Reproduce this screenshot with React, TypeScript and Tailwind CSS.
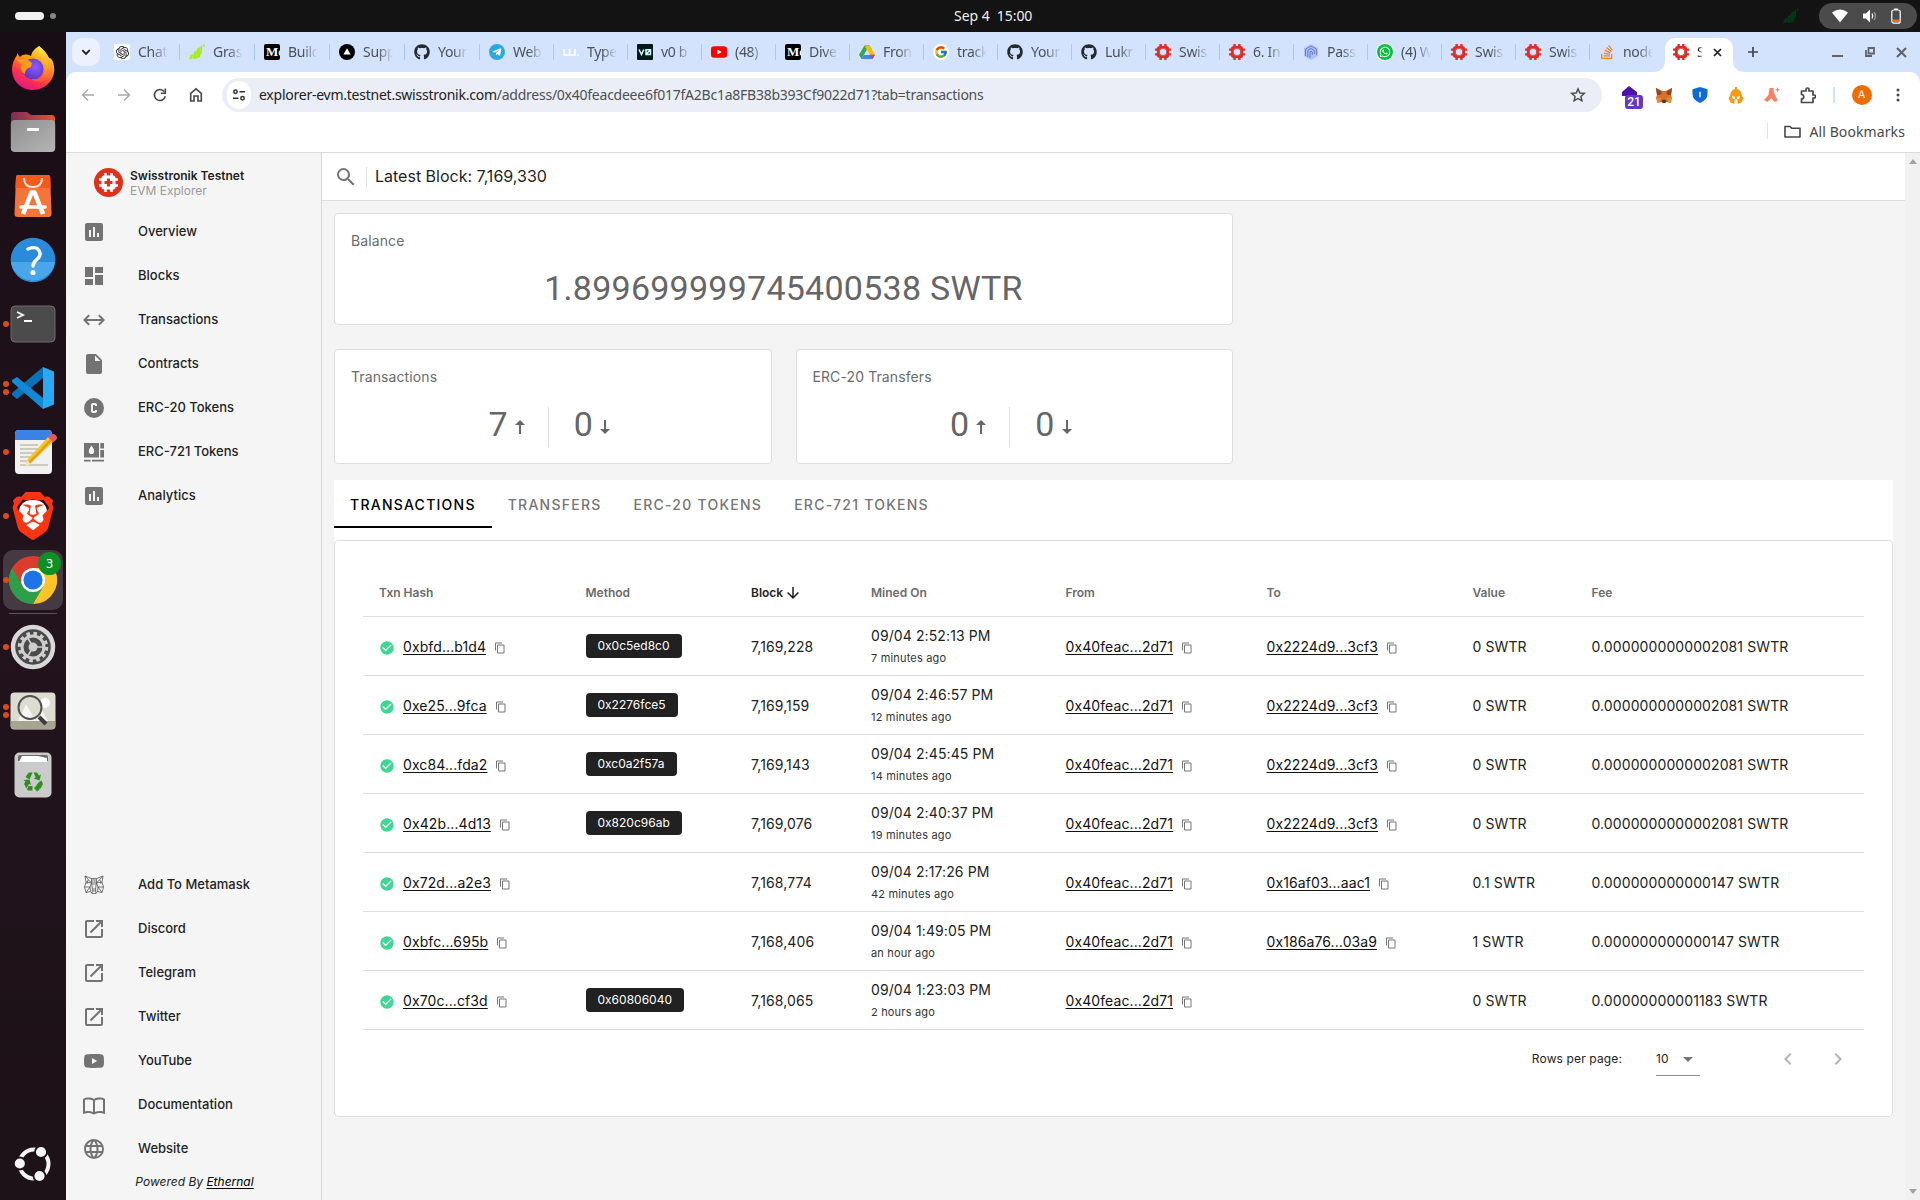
import React from "react";
import { FaGithub, FaTelegramPlane, FaWhatsapp, FaStackOverflow } from "react-icons/fa";
import { SiOpenai, SiBrave } from "react-icons/si";
import { FcGoogle } from "react-icons/fc";

/* ---------- icon paths ---------- */

const P = {
  chart:
    "M9 17H7V10H9V17M13 17H11V7H13V17M17 17H15V13H17V17M19 3H5C3.9 3 3 3.9 3 5V19C3 20.1 3.9 21 5 21H19C20.1 21 21 20.1 21 19V5C21 3.9 20.1 3 19 3Z",
  dashboard: "M13,3V9H21V3M13,21H21V11H13M3,21H11V15H3M3,13H11V3H3V13Z",
  swap: "M6.45,17.45L1,12L6.45,6.55L7.86,7.96L4.83,11H19.17L16.14,7.96L17.55,6.55L23,12L17.55,17.45L16.14,16.04L19.17,13H4.83L7.86,16.04L6.45,17.45Z",
  file: "M13,9V3.5L18.5,9M6,2C4.89,2 4,2.89 4,4V20A2,2 0 0,0 6,22H18A2,2 0 0,0 20,20V8L14,2H6Z",
  alphaC:
    "M11,7A2,2 0 0,0 9,9V15A2,2 0 0,0 11,17H13A2,2 0 0,0 15,15V14H13V15H11V9H13V10H15V9A2,2 0 0,0 13,7H11M12,2A10,10 0 0,1 22,12A10,10 0 0,1 12,22A10,10 0 0,1 2,12A10,10 0 0,1 12,2Z",
  art: "M2,3H17V17.5H2ZM9.5,5.5C8,7.8 6.8,9.3 6.8,11.2A2.7,2.8 0 0,0 12.2,11.2C12.2,9.3 11,7.8 9.5,5.5ZM18.3,3H22V8.5H18.3ZM18.3,10H22V17.5H18.3ZM2,19.8H8.6V21.6H2ZM10,19.8H22V21.6H10Z",
  open: "M14,3V5H17.59L7.76,14.83L9.17,16.24L19,6.41V10H21V3M19,19H5V5H12V3H5C3.89,3 3,3.9 3,5V19A2,2 0 0,0 5,21H19A2,2 0 0,0 21,19V12H19V19Z",
  youtube:
    "M10,15L15.19,12L10,9V15M21.56,7.17C21.69,7.64 21.78,8.27 21.84,9.07C21.91,9.87 21.94,10.56 21.94,11.16L22,12C22,14.19 21.84,15.8 21.56,16.83C21.31,17.73 20.73,18.31 19.83,18.56C19.36,18.69 18.5,18.78 17.18,18.84C15.88,18.91 14.69,18.94 13.59,18.94L12,19C7.81,19 5.2,18.84 4.17,18.56C3.27,18.31 2.69,17.73 2.44,16.83C2.31,16.36 2.22,15.73 2.16,14.93C2.09,14.13 2.06,13.44 2.06,12.84L2,12C2,9.81 2.16,8.2 2.44,7.17C2.69,6.27 3.27,5.69 4.17,5.44C4.64,5.31 5.5,5.22 6.82,5.16C8.12,5.09 9.31,5.06 10.41,5.06L12,5C16.19,5 18.8,5.16 19.83,5.44C20.73,5.69 21.31,6.27 21.56,7.17Z",
  book: "M12 21.5C10.65 20.65 8.2 20 6.5 20C4.85 20 3.15 20.3 1.75 21.05C1.65 21.1 1.6 21.1 1.5 21.1C1.25 21.1 1 20.85 1 20.6V6C1.6 5.55 2.25 5.25 3 5C4.11 4.65 5.33 4.5 6.5 4.5C8.45 4.5 10.55 4.9 12 6C13.45 4.9 15.55 4.5 17.5 4.5C18.67 4.5 19.89 4.65 21 5C21.75 5.25 22.4 5.55 23 6V20.6C23 20.85 22.75 21.1 22.5 21.1C22.4 21.1 22.35 21.1 22.25 21.05C20.85 20.3 19.15 20 17.5 20C15.8 20 13.35 20.65 12 21.5M11 7.5C9.64 6.9 7.84 6.5 6.5 6.5C5.3 6.5 4.1 6.65 3 7V18.5C4.1 18.15 5.3 18 6.5 18C7.84 18 9.64 18.4 11 19V7.5M13 19C14.36 18.4 16.16 18 17.5 18C18.7 18 19.9 18.15 21 18.5V7C19.9 6.65 18.7 6.5 17.5 6.5C16.16 6.5 14.36 6.9 13 7.5V19Z",
  web: "M16.36,14C16.44,13.34 16.5,12.68 16.5,12C16.5,11.32 16.44,10.66 16.36,10H19.74C19.9,10.64 20,11.31 20,12C20,12.69 19.9,13.36 19.74,14M14.59,19.56C15.19,18.45 15.65,17.25 15.97,16H18.92C17.96,17.65 16.43,18.93 14.59,19.56M14.34,14H9.66C9.56,13.34 9.5,12.68 9.5,12C9.5,11.32 9.56,10.65 9.66,10H14.34C14.43,10.65 14.5,11.32 14.5,12C14.5,12.68 14.43,13.34 14.34,14M12,19.96C11.17,18.76 10.5,17.43 10.09,16H13.91C13.5,17.43 12.83,18.76 12,19.96M8,8H5.08C6.03,6.34 7.57,5.06 9.4,4.44C8.8,5.55 8.35,6.75 8,8M5.08,16H8C8.35,17.25 8.8,18.45 9.4,19.56C7.57,18.93 6.03,17.65 5.08,16M4.26,14C4.1,13.36 4,12.69 4,12C4,11.31 4.1,10.64 4.26,10H7.64C7.56,10.66 7.5,11.32 7.5,12C7.5,12.68 7.56,13.34 7.64,14M12,4.03C12.83,5.23 13.5,6.57 13.91,8H10.09C10.5,6.57 11.17,5.23 12,4.03M18.92,8H15.97C15.65,6.75 15.19,5.55 14.59,4.44C16.43,5.07 17.96,6.34 18.92,8M12,2C6.47,2 2,6.5 2,12A10,10 0 0,0 12,22A10,10 0 0,0 22,12A10,10 0 0,0 12,2Z",
  magnify:
    "M9.5,3A6.5,6.5 0 0,1 16,9.5C16,11.11 15.41,12.59 14.44,13.73L14.71,14H15.5L20.5,19L19,20.5L14,15.5V14.71L13.73,14.44C12.59,15.41 11.11,16 9.5,16A6.5,6.5 0 0,1 3,9.5A6.5,6.5 0 0,1 9.5,3M9.5,5C7,5 5,7 5,9.5C5,12 7,14 9.5,14C12,14 14,12 14,9.5C14,7 12,5 9.5,5Z",
  copy: "M19,21H8V7H19M19,5H8A2,2 0 0,0 6,7V21A2,2 0 0,0 8,23H19A2,2 0 0,0 21,21V7A2,2 0 0,0 19,5M16,1H4A2,2 0 0,0 2,3V17H4V3H16V1Z",
  check: "M12 2C6.5 2 2 6.5 2 12S6.5 22 12 22 22 17.5 22 12 17.5 2 12 2M10 17L5 12L6.41 10.59L10 14.17L17.59 6.58L19 8L10 17Z",
  down: "M11,4H13V16L18.5,10.5L19.92,11.92L12,19.84L4.08,11.92L5.5,10.5L11,16V4Z",
  upThin: "M7.03 9.97H11.03V18.89L13.04 18.92V9.97H17.03L12.03 4.97Z",
  downThin: "M7.03 13.92H11.03V5L13.04 4.97V13.92H17.03L12.03 18.92Z",
  left: "M15.41,16.58L10.83,12L15.41,7.41L14,6L8,12L14,18L15.41,16.58Z",
  right: "M8.59,16.58L13.17,12L8.59,7.41L10,6L16,12L10,18L8.59,16.58Z",
  caret: "M7,10L12,15L17,10H7Z",
};

function Mdi({ d, size, className }: { d: string; size: number; className?: string }) {
  return (
    <svg width={size} height={size} viewBox="0 0 24 24" fill="currentColor" fillRule="evenodd" className={`shrink-0 ${className ?? ""}`}>
      <path d={d} />
    </svg>
  );
}

/* ---------- favicons ---------- */

const Swiss = () => (
  <svg width="16" height="16" viewBox="0 0 16 16" fill="none" stroke="#df2b25">
    <rect x="3.4" y="3.4" width="9.2" height="9.2" rx="1.2" strokeWidth="2.8" />
    <path d="M5.600 0v3M10.400 0v3M5.600 13v3M10.400 13v3M0 5.600h3M0 10.400h3M13 5.600h3M13 10.400h3" strokeWidth="2.400" />
    <path d="M4.600 5.200h1.600M9.800 5.200h1.600M4.600 10.800h1.600M9.800 10.800h1.600" strokeWidth="1.200" />
  </svg>
);
const Grass = ({ color }: { color: string }) => (
  <svg width="16" height="16" viewBox="0 0 16 16" fill={color}>
    <path d="M0 15.500L1.500 11L4 10L3.500 14.500ZM4 14.500L4.800 8L7.800 6.500L7.500 15ZM7.800 14.500V5L11.200 3V13ZM11.400 11V2.500L12.800 1.500L13.200 4L13 9ZM13.200 1.500L15.800 0L15.500 3Z" />
  </svg>
);
const Medium = () => (
  <div className="flex size-4 items-center overflow-hidden rounded-xs bg-black pl-0.5 font-['Liberation_Serif',serif] text-[13px] font-bold text-white">Me</div>
);
const Github = () => <FaGithub size={16} color="#24292f" />;

const favicons: Record<string, React.ReactNode> = {
  chat: (
    <div className="flex size-4 items-center justify-center rounded-xs bg-white">
      <SiOpenai size={13} color="#222" />
    </div>
  ),
  grass: <Grass color="#a5ee1c" />,
  medium: <Medium />,
  vercel: (
    <svg width="16" height="16" viewBox="0 0 16 16">
      <circle cx="8" cy="8" r="8" />
      <path d="M8 4.2L11.6 10.4H4.4Z" fill="#fff" />
    </svg>
  ),
  github: <Github />,
  telegram: (
    <div className="flex size-4 items-center justify-center rounded-full bg-[#2fa6de]">
      <FaTelegramPlane size={10} color="#fff" />
    </div>
  ),
  type: (
    <svg width="16" height="16" viewBox="0 0 16 16" fill="none" stroke="#f4f8ff" strokeWidth="2">
      <path d="M1 5v6h11V5M6.500 5v6M14 11h2" />
    </svg>
  ),
  v0: (
    <svg width="16" height="16" viewBox="0 0 16 16">
      <rect width="16" height="16" rx="1" fill="#04191a" />
      <path d="M2 5.500L4.500 10.500L6.800 5.500M9 5.800h4.500v4.600H9ZM9 10.200L13.500 6" fill="none" stroke="#c7f7ee" strokeWidth="1.600" />
    </svg>
  ),
  youtube: (
    <svg width="16" height="16" viewBox="0 0 16 16">
      <rect y="2.2" width="16" height="11.6" rx="3" fill="#f00" />
      <path d="M6.300 5.500L10.800 8L6.300 10.500Z" fill="#fff" />
    </svg>
  ),
  drive: (
    <svg width="16" height="16" viewBox="0 0 16 16">
      <path d="M5.500 1.500h5L13 6l-3 .5L8 5Z" fill="#188038" />
      <path d="M5.500 1.500L0 10.800L2.500 15L8 5.800Z" fill="#34a853" />
      <path d="M10.500 1.500L16 10.800h-5L5.600 1.500Z" fill="#fbbc04" />
      <path d="M5 10.800H16L13.500 15h-11Z" fill="#4285f4" />
      <path d="M8 6L10.800 10.800H5.200Z" fill="#d3e3fd" />
      <path d="M11 10.800h5L13.500 15Z" fill="#ea4335" />
    </svg>
  ),
  google: (
    <div className="flex size-4 items-center justify-center rounded-full bg-white">
      <FcGoogle size={14} />
    </div>
  ),
  swiss: <Swiss />,
  pass: (
    <svg width="16" height="16" viewBox="0 0 16 16" fill="none">
      <path d="M8 0L15 4V12L8 16L1 12V4Z" fill="#a9c4f6" />
      <path d="M2.500 12V5L8 2L13.500 5V11M4.800 13V6.300L8 4.500L11.300 6.300V10M7 14V8L8 7.200L9.300 8v3" stroke="#6d79dc" strokeWidth="1" />
    </svg>
  ),
  whatsapp: (
    <div className="flex size-4 items-center justify-center rounded-full bg-[#0abf3f] ring-1 ring-white/70">
      <FaWhatsapp size={12} color="#fff" />
    </div>
  ),
  stack: <FaStackOverflow size={16} color="#f0802b" />,
};

const tabs: [string, string][] = [
  ["chat", "Chat"],
  ["grass", "Gras"],
  ["medium", "Build"],
  ["vercel", "Supp"],
  ["github", "Your"],
  ["telegram", "Web"],
  ["type", "Type"],
  ["v0", "v0 b"],
  ["youtube", "(48)"],
  ["medium", "Dive"],
  ["drive", "Fron"],
  ["google", "track"],
  ["github", "Your"],
  ["github", "Lukr"],
  ["swiss", "Swis"],
  ["swiss", "6. In"],
  ["pass", "Pass"],
  ["whatsapp", "(4) W"],
  ["swiss", "Swis"],
  ["swiss", "Swis"],
  ["stack", "node"],
];

/* ---------- desktop chrome ---------- */

function TopBar() {
  return (
    <div className="grid h-8 shrink-0 grid-cols-3 items-center bg-[#131313] text-[#f0f0f0]">
      <div className="flex items-center gap-[6px] pl-[15px]">
        <div className="h-2 w-[29px] rounded-full bg-[#f2f2f2]" />
        <div className="size-1.5 rounded-full bg-[#888]" />
      </div>
      <div className="pb-[2px] pl-[314px] font-['Noto_Sans',sans-serif] text-[14px] tracking-[-0.050px] whitespace-pre">Sep 4  15:00</div>
      <div className="flex items-center justify-end gap-[20px] pr-[3px]">
        <Grass color="#053812" />
        <div className="flex h-[26px] w-[98px] items-center justify-between rounded-full bg-[#4b4b4b] pr-[16px] pl-[13px]">
          <svg width="16" height="14" viewBox="0 0 16 14" fill="#fff">
            <path d="M8 13.500L0 3.500Q8 -2.500 16 3.500Z" />
          </svg>
          <svg width="16" height="16" viewBox="0 0 16 16" fill="none">
            <path d="M1 5.500H4L8 1.500V14.500L4 10.500H1Z" fill="#fff" />
            <path d="M10 5.500Q11.500 8 10 10.500" stroke="#fff" strokeWidth="1.300" />
            <path d="M12 4Q15 8 12 12" stroke="#999" strokeWidth="1.300" />
          </svg>
          <svg width="10" height="16" viewBox="0 0 10 16">
            <rect x="0.800" y="2" width="8.400" height="13.200" rx="2" fill="none" stroke="#fff" strokeWidth="1.200" />
            <rect x="3" y="0.500" width="4" height="1.500" fill="#fff" />
            <rect x="2" y="11.500" width="6" height="2.500" fill="#f0692a" />
          </svg>
        </div>
      </div>
    </div>
  );
}

const DockFirefox = () => (
  <svg width="44" height="46" viewBox="0 0 44 46">
    <defs>
      <linearGradient id="ff1" x1="0.8" y1="0" x2="0.3" y2="1">
        <stop offset="0" stopColor="#fff44f" />
        <stop offset="0.4" stopColor="#ff980e" />
        <stop offset="0.7" stopColor="#ff3647" />
        <stop offset="1" stopColor="#e31587" />
      </linearGradient>
      <linearGradient id="ff3" x1="0.3" y1="0" x2="0.4" y2="1">
        <stop offset="0" stopColor="#ffee45" />
        <stop offset="0.5" stopColor="#ffb52c" />
        <stop offset="1" stopColor="#ff5a3a" />
      </linearGradient>
      <radialGradient id="ff2" cx="0.6" cy="0.4" r="0.6">
        <stop offset="0" stopColor="#9059ff" />
        <stop offset="1" stopColor="#5b39c4" />
      </radialGradient>
    </defs>
    <path d="M28 1C33 5 36 9 38 13C40 13 41 15 42 17C47 32 36 45 22 45C10 45 1 36 1 24C1 19 3 14 6 10V8L9 12C12 9 16 9 20 11C21 7 23 4 28 1Z" fill="url(#ff1)" />
    <circle cx="22" cy="24" r="10.500" fill="url(#ff2)" />
    <path d="M5 12L9 15C13 13 17 14 21 18L20 22C16 23 14 25 14 29C9 27 9 22 11 19C8 18 6 16 5 12Z" fill="#ff9a1c" />
    <path d="M28 1C26 10 34 14 34 24C34 33 26 36 20 34C31 41 42 34 42 20C41 15 39 15 38 13C36 9 33 5 28 1Z" fill="url(#ff3)" opacity="0.900" />
  </svg>
);
const DockFiles = () => (
  <svg width="46" height="42" viewBox="0 0 46 42">
    <defs>
      <linearGradient id="fi1">
        <stop offset="0" stopColor="#792d5c" />
        <stop offset="1" stopColor="#e8562a" />
      </linearGradient>
      <linearGradient id="fi2" x2="1" y2="1">
        <stop offset="0" stopColor="#8f8f8f" />
        <stop offset="1" stopColor="#b5b5b5" />
      </linearGradient>
    </defs>
    <path d="M1 4Q1 1 4 1H17L21 4H42Q45 4 45 8V22H1Z" fill="url(#fi1)" />
    <rect x="0.800" y="9" width="44.400" height="32" rx="4" fill="url(#fi2)" />
    <rect x="17" y="17" width="12" height="3" rx="1" fill="#fff" />
  </svg>
);
const DockStore = () => (
  <svg width="38" height="44" viewBox="0 0 38 44">
    <path d="M4 1H34Q36 1 36.200 3L37.500 40Q37.500 43 34.500 43H3.500Q0.500 43 0.500 40L2 3Q2 1 4 1Z" fill="#f4743a" />
    <path d="M4 1H34Q36 1 36.200 3L36.700 14H1.400L2 3Q2 1 4 1Z" fill="#f15a1f" />
    <path d="M10 4Q10 13 19 13T28 4" fill="none" stroke="#ffe3d3" strokeWidth="2" />
    <path d="M9 40L17.500 18.500H20.500L29 40" fill="none" stroke="#fff" strokeWidth="4.600" strokeLinejoin="round" />
    <path d="M7 33H31" stroke="#fff" strokeWidth="3.600" strokeLinecap="round" />
  </svg>
);
const DockHelp = () => (
  <svg width="46" height="46" viewBox="0 0 46 46">
    <circle cx="23" cy="23" r="22.300" fill="#2a8bdb" />
    <path d="M1 25H45A22.300 22.300 0 0 1 1 25Z" fill="#48a6e9" />
    <path d="M18 12Q28 8 30 16C31 23 23 22 23 29" fill="none" stroke="#fff" strokeWidth="3.400" strokeLinecap="round" />
    <circle cx="23" cy="35.500" r="2.600" fill="#fff" />
  </svg>
);
const DockTerminal = () => (
  <svg width="46" height="38" viewBox="0 0 46 38">
    <rect x="1" y="1" width="44" height="36" rx="4" fill="#4b4b4b" stroke="#6b6b6b" />
    <path d="M7 7L13 10L7 13M14 16H22" fill="none" stroke="#fff" strokeWidth="1.800" />
  </svg>
);
const DockCode = () => (
  <svg width="42" height="42" viewBox="0 0 42 42">
    <path d="M31 0V11L5 32L0 28V26Z" fill="#0a72b8" />
    <path d="M5 10L31 31V42L0 15V13Z" fill="#1389d6" />
    <path d="M31 0L42 4.500V37.500L31 42Z" fill="#29aaf3" />
  </svg>
);
const DockNotes = () => (
  <svg width="44" height="46" viewBox="0 0 44 46">
    <rect x="1" y="1" width="37" height="44" rx="4" fill="#f1f1f1" />
    <path d="M1 11V5Q1 1 5 1H34Q38 1 38 5V11Z" fill="#3a83e4" />
    <path d="M6 16H24M6 20H24M6 24H20M6 28H18M6 32H14M6 36H34" stroke="#c1bdae" strokeWidth="1.600" />
    <path d="M11 37L13 31L34 8L39 13L17 34Z" fill="#f6c42c" />
    <path d="M15 34L37 11" stroke="#e39b12" strokeWidth="2" />
    <path d="M11 38L13 31L17 35Z" fill="#f4dfb0" />
    <path d="M34 8L37 5Q40 4 42.500 7Q44 9 42 11L39 13.500Z" fill="#ea5460" />
  </svg>
);
const DockBrave = () => (
  <div className="relative flex h-12 w-[48px] items-center justify-center">
    <div className="h-8 w-7 rounded-xl bg-white" />
    <SiBrave size={48} color="#fb3512" className="absolute inset-0" />
  </div>
);
const DockChrome = () => (
  <svg width="48" height="48" viewBox="0 0 48 48">
    <circle cx="24" cy="24" r="24" fill="#dd3a30" />
    <path d="M24 12H44.800A24 24 0 0 1 24 48L34.400 30Z" fill="#fbc527" />
    <path d="M3.200 12L13.600 30L24 36L34.400 30L24 48A24 24 0 0 1 3.200 12Z" fill="#2d9f4b" />
    <circle cx="24" cy="24" r="12" fill="#fff" />
    <circle cx="24" cy="24" r="9.600" fill="#1d74e8" />
  </svg>
);
const DockGear = () => (
  <svg width="46" height="46" viewBox="0 0 46 46" fill="none">
    <circle cx="23" cy="23" r="20" fill="#4a4a4a" stroke="#d9d9d9" strokeWidth="4.500" />
    <circle cx="23" cy="23" r="13.500" stroke="#cfcfcf" strokeWidth="3.500" strokeDasharray="3.600 3.470" />
    <circle cx="23" cy="23" r="11" stroke="#cfcfcf" strokeWidth="3" />
    <circle cx="23" cy="23" r="4.500" fill="#cfcfcf" />
    <path d="M23 23H34M23 23L17.500 13.500M23 23L17.500 32.500" stroke="#cfcfcf" strokeWidth="1.600" />
  </svg>
);
const DockViewer = () => (
  <svg width="46" height="38" viewBox="0 0 46 38" fill="none">
    <rect x="0.500" y="0.500" width="45" height="37" rx="4" fill="#dddcd0" />
    <path d="M1 29H45V34Q45 37 42 37H4Q1 37 1 34Z" fill="#a8a493" />
    <path d="M16 12L26 29H8ZM32 18L38 29H26Z" fill="#f6f5f0" />
    <circle cx="35" cy="11" r="5" fill="#fff" />
    <circle cx="20" cy="15.500" r="11.500" stroke="#515151" strokeWidth="2" />
    <path d="M29 25L36 32" stroke="#3d3d3d" strokeWidth="4" />
  </svg>
);
const DockTrash = () => (
  <svg width="38" height="46" viewBox="0 0 38 46" fill="none">
    <rect x="0.500" y="0.500" width="37" height="45" rx="5" fill="#cbcbcb" />
    <path d="M4 9V5Q4 3 6 3H32Q34 3 34 5V9Z" fill="#6a6a6a" />
    <path d="M5 10L8 4H24L33 6V10Z" fill="#fff" />
    <g fill="#2f8f1c">
      <path d="M11.500 25L14.800 20.500H18.500L15.500 27.500Z" />
      <path d="M19.500 20.500H23L25 23.500L27 22.500L25.500 28.500L19.800 26.500L21.700 25.500Z" />
      <path d="M9.500 28L15.500 27.500L17 33L15 32L12.500 36.500L10 32L11.500 29.500Z" />
      <path d="M25 30L27.500 28.500L29 32L26.500 36.500H24.500L22.500 33Z" />
      <path d="M13 37.500L14.500 34H18.500V38.500H14ZM20 36L23.500 32.500V34.500H26L25 38.500H23.500V40Z" />
    </g>
  </svg>
);

function DockItem({ dots = 0, active = false, children }: { dots?: number; active?: boolean; children: React.ReactNode }) {
  return (
    <div className="relative flex h-16 w-full shrink-0 items-center justify-center">
      {active && <div className="absolute top-0.5 left-[3px] size-[60px] rounded-[10px] bg-[#453a41]" />}
      <div className="relative">{children}</div>
      <div className="absolute left-[3px] flex flex-col gap-0.5">
        {Array.from({ length: dots }, (_, i) => (
          <div key={i} className="size-[6px] rounded-full bg-[#d84c1b]" />
        ))}
      </div>
    </div>
  );
}

function Dock() {
  return (
    <div className="flex w-[66px] shrink-0 flex-col items-center bg-linear-to-b from-[#190d15] via-[#22131d] to-[#1d1217] pt-1">
      <DockItem><DockFirefox /></DockItem>
      <DockItem><DockFiles /></DockItem>
      <DockItem><DockStore /></DockItem>
      <DockItem><DockHelp /></DockItem>
      <DockItem dots={1}><DockTerminal /></DockItem>
      <DockItem dots={2}><DockCode /></DockItem>
      <DockItem dots={1}><div className="translate-x-[3px]"><DockNotes /></div></DockItem>
      <DockItem dots={1}><DockBrave /></DockItem>
      <DockItem dots={1} active>
        <DockChrome />
        <div className="absolute -top-1 -right-[4px] flex size-[23px] items-center justify-center rounded-full bg-[#0f9026] font-['DejaVu_Sans',sans-serif] text-[12px] text-white">3</div>
      </DockItem>
      <div className="h-px w-12 shrink-0 bg-[#5d5459] mt-px mb-px" />
      <DockItem dots={1}><DockGear /></DockItem>
      <DockItem dots={2}><DockViewer /></DockItem>
      <DockItem><DockTrash /></DockItem>
      <div className="mt-auto mb-[17px]">
        <svg width="38" height="38" viewBox="0 0 38 38" fill="none">
          <circle cx="20" cy="19" r="14.500" stroke="#f4f4f4" strokeWidth="4" />
          <g fill="#f4f4f4" stroke="#1d1217" strokeWidth="1.800">
            <circle cx="5.800" cy="18.500" r="6" />
            <circle cx="27" cy="7" r="6" />
            <circle cx="25.500" cy="31" r="6" />
          </g>
        </svg>
      </div>
    </div>
  );
}

/* ---------- browser chrome ---------- */

function TabStrip() {
  return (
    <div className="flex h-10 shrink-0 items-center bg-[#d3e3fd] font-['Noto_Sans',sans-serif] text-[14px] text-[#4b5057]">
      <div className="ml-1.5 flex size-7 shrink-0 items-center justify-center rounded-[10px] bg-[#ebf1fe]">
        <svg width="10" height="7" viewBox="0 0 10 7" fill="none" stroke="#1f1f1f" strokeWidth="1.900">
          <path d="M1.300 1.200L5 4.900L8.700 1.200" />
        </svg>
      </div>
      <div className="ml-[6px] flex w-[1559px] shrink-0">
        {tabs.map(([icon, label], i) => (
          <div key={i} className={`flex h-7 shrink-0 items-center ${i < 5 ? "w-[75px]" : "w-[74px]"}`}>
            <div className="ml-2 flex size-4 shrink-0 items-center justify-center">{favicons[icon]}</div>
            <div className="ml-2 w-[30px] overflow-hidden mask-r-from-50% pb-0.5 tracking-[-0.300px] whitespace-nowrap">{label}</div>
            {i < tabs.length - 1 && <div className="mr-px ml-auto h-4 w-[1.500px] rounded-full bg-[#a8c7fa]" />}
          </div>
        ))}
      </div>
      <div className="relative flex h-[34px] w-[68px] shrink-0 items-center self-end rounded-t-[10px] bg-white pb-1.5">
        <svg className="absolute bottom-0 -left-3" width="12" height="12" viewBox="0 0 12 12" fill="#fff">
          <path d="M12 0V12H0Q12 12 12 0Z" />
        </svg>
        <svg className="absolute -right-3 bottom-0" width="12" height="12" viewBox="0 0 12 12" fill="#fff">
          <path d="M0 0V12H12Q0 12 0 0Z" />
        </svg>
        <div className="ml-2"><Swiss /></div>
        <div className="ml-2 w-[6px] overflow-hidden mask-r-from-30% pb-0.5 text-[#222]">S</div>
        <svg className="ml-[10px]" width="9" height="9" viewBox="0 0 9 9" stroke="#222" strokeWidth="1.700">
          <path d="M1 1L8 8M8 1L1 8" />
        </svg>
      </div>
      <svg className="ml-[14px]" width="12" height="12" viewBox="0 0 12 12" stroke="#42464b" strokeWidth="1.700">
        <path d="M6 1V11M1 6H11" />
      </svg>
      <div className="mr-[13px] ml-auto flex items-center gap-[21.500px]">
        <div className="mt-2 h-0.5 w-[11px] bg-[#5f6368]" />
        <svg width="10" height="10" viewBox="0 0 10 10" fill="none" stroke="#5f6368" strokeWidth="1.800">
          <path d="M3.500 1H9V6.500H3.500ZM1 3V9H7" />
        </svg>
        <svg width="11" height="11" viewBox="0 0 11 11" stroke="#5f6368" strokeWidth="2">
          <path d="M1 1L10 10M10 1L1 10" />
        </svg>
      </div>
    </div>
  );
}

function Toolbar() {
  return (
    <div className="flex h-[46px] shrink-0 items-center">
      <div className="flex w-[156px] shrink-0 items-center gap-5 pl-[14px] text-[#474747]">
        <svg width="16" height="16" viewBox="0 0 16 16" fill="none" stroke="#a9a9a9" strokeWidth="1.500">
          <path d="M14 8H3M8 2.500L2.500 8L8 13.500" />
        </svg>
        <svg width="16" height="16" viewBox="0 0 16 16" fill="none" stroke="#a9a9a9" strokeWidth="1.500">
          <path d="M2 8H13M8 2.500L13.500 8L8 13.500" />
        </svg>
        <svg width="16" height="16" viewBox="0 0 16 16" fill="none" stroke="currentColor" strokeWidth="1.600">
          <path d="M13.300 9.200A5.500 5.500 0 1 1 12.300 4.600" />
          <path d="M13.300 1.500V6.200H8.800" />
        </svg>
        <svg width="16" height="16" viewBox="0 0 16 16" fill="none" stroke="currentColor" strokeWidth="1.600">
          <path d="M2.700 14V6.300L8 1.800L13.300 6.300V14H10V9H6V14Z" />
        </svg>
      </div>
      <div className="flex h-[34px] w-[1380px] shrink-0 items-center rounded-full bg-[#ebeef7] pl-[5px]">
        <div className="flex h-7 w-6 items-center justify-center rounded-full bg-white">
          <svg width="14" height="14" viewBox="0 0 14 14" fill="none" stroke="#333" strokeWidth="1.500">
            <circle cx="3.500" cy="3.800" r="1.700" />
            <path d="M7.500 3.800H13M1 10.200H6.500" />
            <circle cx="10.500" cy="10.200" r="1.700" />
          </svg>
        </div>
        <div className="ml-2 pb-[2px] font-['Noto_Sans',sans-serif] text-[14px] tracking-[-0.245px] whitespace-nowrap text-[#4d5053]">
          <span className="text-[#222]">explorer-evm.testnet.swisstronik.com</span>/address/0x40feacdeee6f017fA2Bc1a8FB38b393Cf9022d71?tab=transactions
        </div>
        <svg className="mr-4 ml-auto" width="16" height="16" viewBox="0 0 16 16" fill="none" stroke="#474747" strokeWidth="1.400">
          <path d="M8 1.800L9.800 6L14.300 6.400L10.900 9.400L11.900 13.800L8 11.500L4.100 13.800L5.100 9.400L1.700 6.400L6.200 6Z" />
        </svg>
      </div>
      <div className="ml-[19px] flex grow items-center">
        <div className="relative size-[18px]">
          <svg width="18" height="18" viewBox="0 0 18 18" fill="#4a12ab">
            <path d="M8 0L16 6V10H1V6Z" />
          </svg>
          <div className="absolute top-[9px] left-[4px] flex h-[14px] w-[18px] items-center justify-center rounded-[3px] bg-[#6438c0] font-['Roboto',sans-serif] text-[12px] font-medium text-white">21</div>
        </div>
        <svg className="ml-[16px]" width="18" height="17" viewBox="0 0 18 17">
          <path d="M1 1L7.500 4H10.500L17 1L16 8L17 11L15.500 16L11 15L9 16.500L7 15L2.500 16L1 11L2 8Z" fill="#d8702a" />
          <path d="M1 1L7 5L5 8L2 8ZM17 1L11 5L13 8L16 8Z" fill="#8e4a1d" />
          <path d="M2 11L6 10.500L5 15L2.500 16ZM16 11L12 10.500L13 15L15.500 16Z" fill="#f08a33" />
          <path d="M6.500 13.500L9 12.500L11.500 13.500L10.500 16H7.500Z" fill="#3a4048" />
        </svg>
        <svg className="ml-[19px]" width="16" height="16" viewBox="0 0 16 17">
          <path d="M8 0L16 2.500V7Q16 14 8 17Q0 14 0 7V2.500Z" fill="#0f6ad3" />
          <path d="M8 5V11" stroke="#fff" strokeWidth="1.500" />
        </svg>
        <svg className="ml-[20px]" width="16" height="17" viewBox="0 0 16 17">
          <path d="M7 0H9V2Q13.500 3 14 9L15.500 11L13.500 15.500L9.500 17V12.500H6.500V17L2.500 15.500L0.500 11L2 9Q2.500 3 7 2Z" fill="#f89a10" />
          <path d="M4 8.500L7.200 10L7 12H5L4.200 10.500ZM12 8.500L8.800 10L9 12H11L11.800 10.500Z" fill="#fff" />
        </svg>
        <svg className="ml-[20px]" width="16" height="16" viewBox="0 0 16 16" fill="#fb8163">
          <path d="M5.500 1H9.500L9.800 5L13.500 13.500L10.500 15L7.300 11L3.500 15L0 13L4.500 8Z" />
          <path d="M13.500 0L14.200 2L16 2.800L14.200 3.500L13.500 5.500L12.800 3.500L11 2.800L12.800 2Z" />
        </svg>
        <svg className="ml-[20px]" width="16" height="17" viewBox="0 0 16 17" fill="none" stroke="#474747" strokeWidth="1.700">
          <path d="M1.500 4H6V2.500A1.500 1.500 0 0 1 9 2.500V4H13V8H14A1.500 1.500 0 0 1 14 11H13V15.500H1.500V12A2 2 0 0 0 1.500 7.500Z" strokeLinejoin="round" />
        </svg>
        <div className="ml-[17px] h-4 w-[1.500px] bg-[#d3e3fd]" />
        <div className="ml-[17px] flex size-5 items-center justify-center rounded-full bg-[#ee6c02] font-['Roboto',sans-serif] text-[11px] text-white">A</div>
        <svg className="ml-[24px]" width="4" height="16" viewBox="0 0 4 16" fill="#474747">
          <circle cx="2" cy="3" r="1.500" />
          <circle cx="2" cy="8" r="1.500" />
          <circle cx="2" cy="13" r="1.500" />
        </svg>
      </div>
    </div>
  );
}

function Bookmarks() {
  return (
    <div className="flex h-[35px] shrink-0 items-start justify-end border-b border-[#dcdcdc] pr-[15px]">
      <div className="mt-[3px] flex h-5 items-center font-['Noto_Sans',sans-serif] text-[14px] tracking-[0.100px] text-[#474a4d]">
        <div className="h-4 w-[1.500px] bg-[#d3e3fd]" />
        <svg className="ml-4 mr-[8px]" width="17" height="13" viewBox="0 0 17 13" fill="none" stroke="#474747" strokeWidth="1.600">
          <path d="M1 1.500H6L8 3.300H16V12H1Z" strokeLinejoin="round" />
        </svg>
        All Bookmarks
      </div>
    </div>
  );
}

/* ---------- explorer page ---------- */

const MetaMask = () => (
  <svg width="20" height="20" viewBox="0 0 20 20" fill="none" stroke="#555" strokeWidth="0.800" className="shrink-0">
    <path d="M1 1L7.500 3.500H12.500L19 1L18 7L19.500 12L18 17.500L13.500 16.500L12 18.500H8L6.500 16.500L2 17.500L0.500 12L2 7Z" />
    <path d="M1 1L7.500 8L7.500 3.500M19 1L12.500 8V3.500M2 7L7.500 8L6 12L0.500 12M18 7L12.500 8L14 12L19.500 12M6 12L6.500 16.500M14 12L13.500 16.500M7.500 8L8.500 14H11.500L12.500 8M8.500 14L8 18.500M11.500 14L12 18.500M2 17.500L6 12M18 17.500L14 12M9 4V10M11 4V10M8.500 16H11.500M4 5L3 9M16 5L17 9" />
  </svg>
);

function NavItem({ d, label }: { d?: string; label: string }) {
  return (
    <div className="flex h-11 items-center pl-4">
      <div className="flex size-6 items-center justify-center text-[#737373]">{d ? <Mdi d={d} size={24} /> : <MetaMask />}</div>
      <div className="ml-8 font-['Inter',sans-serif] text-[13px] font-medium text-[#1f1f1f]">{label}</div>
    </div>
  );
}

function Sidebar() {
  return (
    <div className="flex w-[256px] shrink-0 flex-col border-r border-[#d5d5d5] bg-[#f5f5f5]">
      <div className="flex h-[57px] items-center pt-0.5 pl-[28px]">
        <svg width="29" height="29" viewBox="0 0 29 29" fill="none">
          <circle cx="14.500" cy="14.500" r="14.500" fill="#e0321a" />
          <rect x="7.500" y="7.500" width="14" height="14" rx="2.500" fill="#fff" />
          <path d="M11.500 5V9M17.500 5V9M11.500 20V24M17.500 20V24M5 11.500H9M5 17.500H9M20 11.500H24M20 17.500H24" stroke="#fff" strokeWidth="2.600" />
          <path d="M14.500 10.500V18.500M10.500 14.500H18.500" stroke="#e0321a" strokeWidth="3" />
        </svg>
        <div className="ml-[7px] font-['Inter',sans-serif] text-[12px] leading-[15px] whitespace-nowrap">
          <div className="font-semibold text-[#1f1f1f]">Swisstronik Testnet</div>
          <div className="text-[#9a9a9a]">EVM Explorer</div>
        </div>
      </div>
      <div>
        <NavItem d={P.chart} label="Overview" />
        <NavItem d={P.dashboard} label="Blocks" />
        <NavItem d={P.swap} label="Transactions" />
        <NavItem d={P.file} label="Contracts" />
        <NavItem d={P.alphaC} label="ERC-20 Tokens" />
        <NavItem d={P.art} label="ERC-721 Tokens" />
        <NavItem d={P.chart} label="Analytics" />
      </div>
      <div className="mt-auto">
        <NavItem label="Add To Metamask" />
        <NavItem d={P.open} label="Discord" />
        <NavItem d={P.open} label="Telegram" />
        <NavItem d={P.open} label="Twitter" />
        <NavItem d={P.youtube} label="YouTube" />
        <NavItem d={P.book} label="Documentation" />
        <NavItem d={P.web} label="Website" />
      </div>
      <div className="flex h-[29px] justify-center pt-px pl-0.5 font-['Inter',sans-serif] text-[12px] leading-5 text-[#222] italic">
        <span>
          Powered By <span className="text-black underline underline-offset-2">Ethernal</span>
        </span>
      </div>
    </div>
  );
}

function Arrowed({ n, d }: { n: string; d: string }) {
  return (
    <div className="flex items-center">
      <span className="font-['Roboto',sans-serif] text-[34px] leading-10 tracking-[0.250px] text-[#666]">{n}</span>
      <Mdi d={d} size={24} className="mt-1.5 text-[#666]" />
    </div>
  );
}

function CountCard({ title, up, down }: { title: string; up: string; down: string }) {
  return (
    <div className="flex h-[115px] flex-1 flex-col rounded border border-[#dedede] bg-white px-4 pt-4">
      <div className="font-['Inter',sans-serif] text-[14px] leading-[22px] tracking-[0.100px] text-[#6b6b6b]">{title}</div>
      <div className="mt-4 flex h-10 items-center justify-center">
        <Arrowed n={up} d={P.upThin} />
        <div className="mt-1.5 mr-[25px] ml-4 h-10 w-px bg-[#dedede]" />
        <Arrowed n={down} d={P.downThin} />
      </div>
    </div>
  );
}

type Row = { hash: string; method?: string; block: string; time: string; ago: string; to?: string; value: string; fee: string };

const rows: Row[] = [
  { hash: "0xbfd...b1d4", method: "0x0c5ed8c0", block: "7,169,228", time: "09/04 2:52:13 PM", ago: "7 minutes ago", to: "0x2224d9...3cf3", value: "0 SWTR", fee: "0.0000000000002081 SWTR" },
  { hash: "0xe25...9fca", method: "0x2276fce5", block: "7,169,159", time: "09/04 2:46:57 PM", ago: "12 minutes ago", to: "0x2224d9...3cf3", value: "0 SWTR", fee: "0.0000000000002081 SWTR" },
  { hash: "0xc84...fda2", method: "0xc0a2f57a", block: "7,169,143", time: "09/04 2:45:45 PM", ago: "14 minutes ago", to: "0x2224d9...3cf3", value: "0 SWTR", fee: "0.0000000000002081 SWTR" },
  { hash: "0x42b...4d13", method: "0x820c96ab", block: "7,169,076", time: "09/04 2:40:37 PM", ago: "19 minutes ago", to: "0x2224d9...3cf3", value: "0 SWTR", fee: "0.0000000000002081 SWTR" },
  { hash: "0x72d...a2e3", block: "7,168,774", time: "09/04 2:17:26 PM", ago: "42 minutes ago", to: "0x16af03...aac1", value: "0.1 SWTR", fee: "0.000000000000147 SWTR" },
  { hash: "0xbfc...695b", block: "7,168,406", time: "09/04 1:49:05 PM", ago: "an hour ago", to: "0x186a76...03a9", value: "1 SWTR", fee: "0.000000000000147 SWTR" },
  { hash: "0x70c...cf3d", method: "0x60806040", block: "7,168,065", time: "09/04 1:23:03 PM", ago: "2 hours ago", value: "0 SWTR", fee: "0.00000000001183 SWTR" },
];

const COLS = "grid grid-cols-[206.5px_165.5px_120px_194.5px_201px_206px_119px_288.5px] items-center border-b border-[#dedede] *:pl-4";

function Hash({ text }: { text: string }) {
  return (
    <>
      <span className="text-[#111] underline decoration-1 underline-offset-2">{text}</span>
      <Mdi d={P.copy} size={12} className="mt-[3px] ml-[8px] text-[#757575]" />
    </>
  );
}

function TxTable() {
  return (
    <div className="flex h-[577px] flex-col rounded border border-[#dedede] bg-white px-7 font-['Inter',sans-serif] text-[14px] text-[#222]">
      <div className={`${COLS} mt-7 h-12 text-[12px] font-semibold text-[#6b6b6b]`}>
        <div>Txn Hash</div>
        <div>Method</div>
        <div className="flex items-center text-[#222]">
          Block
          <Mdi d={P.down} size={18} className="ml-px" />
        </div>
        <div>Mined On</div>
        <div>From</div>
        <div>To</div>
        <div>Value</div>
        <div>Fee</div>
      </div>
      {rows.map((r) => (
        <div key={r.hash} className={`${COLS} h-[59px] tracking-[0.100px]`}>
          <div className="flex items-center">
            <Mdi d={P.check} size={16} className="mt-1 mr-2 text-[#40d695]" />
            <Hash text={r.hash} />
          </div>
          <div>
            {r.method && <span className="flex h-6 w-fit items-center rounded bg-[#212121] px-3 text-[12px] tracking-normal text-white">{r.method}</span>}
          </div>
          <div>{r.block}</div>
          <div className="pt-px">
            <div className="leading-[22px]">{r.time}</div>
            <div className="text-[11px] leading-[22px] tracking-[0.180px] text-[#333]">{r.ago}</div>
          </div>
          <div className="flex items-center">
            <Hash text="0x40feac...2d71" />
          </div>
          <div className="flex items-center">{r.to && <Hash text={r.to} />}</div>
          <div>{r.value}</div>
          <div>{r.fee}</div>
        </div>
      ))}
      <div className="flex h-[58px] items-center justify-end pr-[14px] text-[12px] tracking-[0.130px]">
        <span>Rows per page:</span>
        <div className="ml-[34px] flex h-[33px] w-11 items-center justify-between border-b border-[#8e8e8e]">
          <span>10</span>
          <Mdi d={P.caret} size={24} className="text-[#757575]" />
        </div>
        <Mdi d={P.left} size={24} className="ml-[76px] text-[#b5b5b5]" />
        <Mdi d={P.right} size={24} className="ml-[26px] text-[#b5b5b5]" />
      </div>
    </div>
  );
}

function Content() {
  return (
    <div className="flex grow flex-col">
      <div className="flex h-12 shrink-0 items-center border-b border-[#dedede] bg-white pl-3 text-[#757575]">
        <Mdi d={P.magnify} size={24} />
        <div className="ml-2 h-5 w-px bg-[#dedede]" />
        <div className="ml-2 pb-0.5 font-['Inter',sans-serif] text-[16px] text-[#1f1f1f]">Latest Block: 7,169,330</div>
      </div>
      <div className="px-3 pt-3">
        <div className="flex w-[899px] flex-col gap-6">
          <div className="h-28 rounded border border-[#dedede] bg-white px-4 pt-4">
            <div className="font-['Inter',sans-serif] text-[14px] leading-[22px] tracking-[0.100px] text-[#6b6b6b]">Balance</div>
            <div className="mt-4 text-center font-['Roboto',sans-serif] text-[34px] leading-10 tracking-[0.250px] text-[#666]">1.899699999745400538 SWTR</div>
          </div>
          <div className="flex gap-6">
            <CountCard title="Transactions" up="7" down="0" />
            <CountCard title="ERC-20 Transfers" up="0" down="0" />
          </div>
        </div>
        <div className="mt-4 w-[1559px] bg-white">
          <div className="mb-3 flex h-12 font-['Inter',sans-serif] text-[14px] font-medium tracking-[1.250px] text-[#757575]">
            <div className="flex items-center border-b-2 border-black px-4 pt-0.5 text-black">TRANSACTIONS</div>
            <div className="flex items-center px-4">TRANSFERS</div>
            <div className="flex items-center px-4">ERC-20 TOKENS</div>
            <div className="flex items-center px-4">ERC-721 TOKENS</div>
          </div>
          <TxTable />
        </div>
      </div>
    </div>
  );
}

function ScrollBar() {
  return (
    <div className="flex w-[15px] shrink-0 flex-col items-center justify-between bg-[#f1f1f1] py-1.5">
      <svg width="8" height="5" viewBox="0 0 8 5" fill="#a3a3a3"><path d="M4 0L8 5H0Z" /></svg>
      <svg width="8" height="5" viewBox="0 0 8 5" fill="#a3a3a3"><path d="M4 5L0 0H8Z" /></svg>
    </div>
  );
}

export default function App() {
  return (
    <div className="flex h-[1200px] w-[1920px] flex-col overflow-hidden bg-[#f4f4f4]">
      <TopBar />
      <div className="flex min-h-0 grow">
        <Dock />
        <div className="flex grow flex-col">
          <TabStrip />
          <div className="bg-[#d3e3fd]">
            <div className="rounded-t-[10px] bg-white">
              <Toolbar />
              <Bookmarks />
            </div>
          </div>
          <div className="flex min-h-0 grow">
            <Sidebar />
            <Content />
            <ScrollBar />
          </div>
        </div>
      </div>
    </div>
  );
}
